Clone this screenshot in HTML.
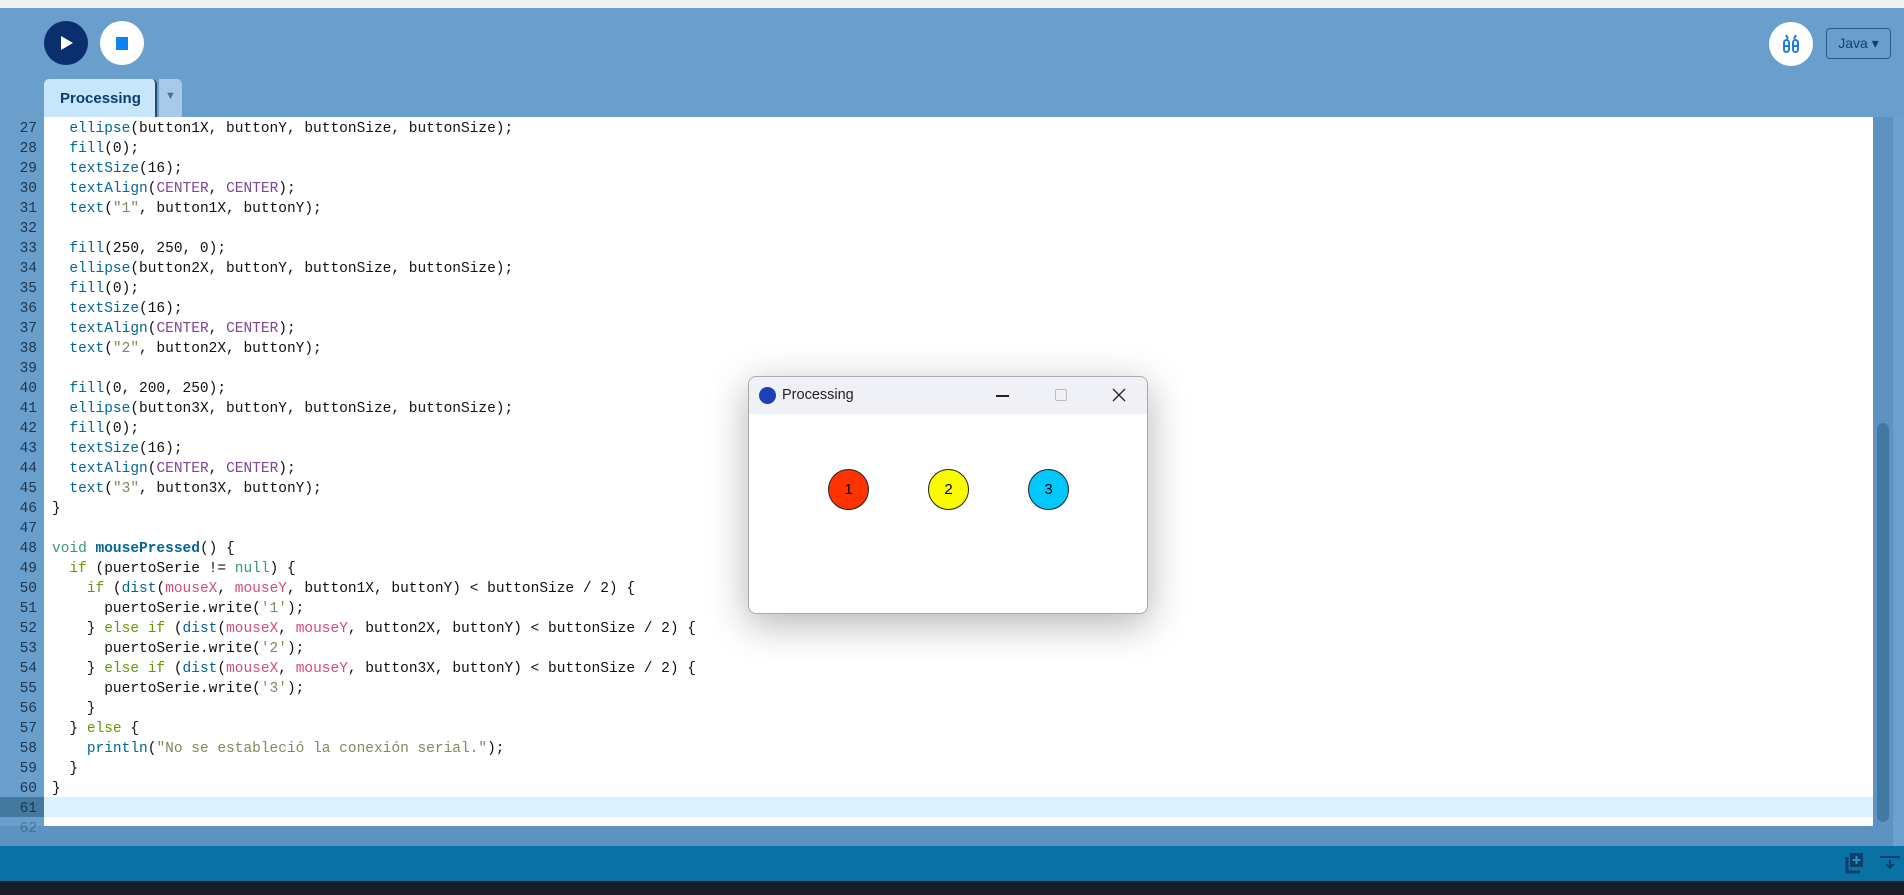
<!DOCTYPE html>
<html><head><meta charset="utf-8"><style>
*{margin:0;padding:0;box-sizing:border-box}
body{width:1904px;height:895px;overflow:hidden;background:#6a9fcd;position:relative;font-family:"Liberation Sans",sans-serif}
.abs{position:absolute}
#code{position:absolute;left:52px;top:119px;font-family:"Liberation Mono",monospace;font-size:14.5px;line-height:20px;color:#111;white-space:pre}
#gut{position:absolute;left:0;top:119px;width:37px;text-align:right;font-family:"Liberation Mono",monospace;font-size:14.5px;line-height:20px;color:#1c3550;white-space:pre}
.f{color:#006699}.c{color:#7d4793}.s{color:#7d8a5e}.k{color:#33997e}.g{color:#669900}.m{color:#d94a7a}.b{color:#006699;font-weight:bold}
</style></head><body>
<div class="abs" style="left:0;top:0;width:1904px;height:8px;background:#f0f0f0"></div>
<div class="abs" style="left:44px;top:21px;width:44px;height:44px;border-radius:50%;background:#0b2f6e"></div>
<svg class="abs" style="left:60px;top:35px" width="14" height="16"><path d="M1 1 L13 8 L1 15Z" fill="#fff"/></svg>
<div class="abs" style="left:100px;top:21px;width:44px;height:44px;border-radius:50%;background:#fff"></div>
<div class="abs" style="left:116px;top:37px;width:12px;height:13px;background:#0a84f0"></div>
<div class="abs" style="left:1769px;top:22px;width:44px;height:44px;border-radius:50%;background:#fff"></div>
<svg class="abs" style="left:1781px;top:33px" width="20" height="22" viewBox="0 0 20 22"><g fill="none" stroke="#1e7fe0" stroke-width="2"><path d="M5 2 L7 6 M15 2 L13 6"/><rect x="3" y="7" width="5" height="12" rx="2.5"/><rect x="12" y="7" width="5" height="12" rx="2.5"/><path d="M3 13 H8 M12 13 H17"/></g></svg>
<div class="abs" style="left:1826px;top:28px;width:65px;height:31px;border:1.5px solid #1f5f8f;border-radius:4px;color:#14406a;font-size:14px;line-height:28px;text-align:center">Java ▾</div>
<div class="abs" style="left:44px;top:79px;width:113px;height:38px;background:#c8e6fb;border-radius:5px 5px 0 0;border-right:2px solid #2c4a66;color:#0d3c6e;font-weight:bold;font-size:15px;line-height:40px;padding-left:16px">Processing</div>
<div class="abs" style="left:159px;top:79px;width:23px;height:38px;background:#a7caeb;border-radius:0 5px 0 0;color:#4f6f8f;font-size:11px;text-align:center;line-height:34px">▼</div>
<div class="abs" style="left:44px;top:117px;width:1829px;height:709px;background:#fff"></div>
<div class="abs" style="left:44px;top:797px;width:1829px;height:20px;background:#ddf0fe"></div>
<div class="abs" style="left:0;top:797px;width:44px;height:20px;background:#44789f"></div>
<div class="abs" style="left:1873px;top:117px;width:20px;height:709px;background:#5e93c1"></div>
<div class="abs" style="left:1893px;top:117px;width:11px;height:729px;background:#6ba0d0"></div>
<div class="abs" style="left:1877px;top:423px;width:12px;height:399px;background:#4179a3;border-radius:6px"></div>
<div class="abs" style="left:0;top:826px;width:1893px;height:20px;background:#5e93c1"></div>
<div class="abs" style="left:0;top:846px;width:1904px;height:35px;background:#0a71a4"></div>
<div class="abs" style="left:0;top:881px;width:1904px;height:14px;background:#171e27"></div>
<svg class="abs" style="left:1845px;top:852px" width="20" height="22"><path d="M2 5 V20 H15" fill="none" stroke="#0b3f6c" stroke-width="3"/><rect x="5" y="1" width="13" height="14" fill="#0b3f6c"/><path d="M11.5 4 V12 M7.5 8 H15.5" stroke="#2a90c8" stroke-width="2"/></svg>
<svg class="abs" style="left:1879px;top:855px" width="22" height="16"><path d="M1 2 H21 M11 5 V13 M7 9 L11 13 L15 9" fill="none" stroke="#0b3f6c" stroke-width="2"/></svg>
<div id="gut">27
28
29
30
31
32
33
34
35
36
37
38
39
40
41
42
43
44
45
46
47
48
49
50
51
52
53
54
55
56
57
58
59
60
61
<span style="opacity:.4">62</span></div>
<div id="code">  <span class="f">ellipse</span>(button1X, buttonY, buttonSize, buttonSize);
  <span class="f">fill</span>(0);
  <span class="f">textSize</span>(16);
  <span class="f">textAlign</span>(<span class="c">CENTER</span>, <span class="c">CENTER</span>);
  <span class="f">text</span>(<span class="s">"1"</span>, button1X, buttonY);

  <span class="f">fill</span>(250, 250, 0);
  <span class="f">ellipse</span>(button2X, buttonY, buttonSize, buttonSize);
  <span class="f">fill</span>(0);
  <span class="f">textSize</span>(16);
  <span class="f">textAlign</span>(<span class="c">CENTER</span>, <span class="c">CENTER</span>);
  <span class="f">text</span>(<span class="s">"2"</span>, button2X, buttonY);

  <span class="f">fill</span>(0, 200, 250);
  <span class="f">ellipse</span>(button3X, buttonY, buttonSize, buttonSize);
  <span class="f">fill</span>(0);
  <span class="f">textSize</span>(16);
  <span class="f">textAlign</span>(<span class="c">CENTER</span>, <span class="c">CENTER</span>);
  <span class="f">text</span>(<span class="s">"3"</span>, button3X, buttonY);
}

<span class="k">void</span> <span class="b">mousePressed</span>() {
  <span class="g">if</span> (puertoSerie != <span class="k">null</span>) {
    <span class="g">if</span> (<span class="f">dist</span>(<span class="m">mouseX</span>, <span class="m">mouseY</span>, button1X, buttonY) &lt; buttonSize / 2) {
      puertoSerie.write(<span class="s">'1'</span>);
    } <span class="g">else</span> <span class="g">if</span> (<span class="f">dist</span>(<span class="m">mouseX</span>, <span class="m">mouseY</span>, button2X, buttonY) &lt; buttonSize / 2) {
      puertoSerie.write(<span class="s">'2'</span>);
    } <span class="g">else</span> <span class="g">if</span> (<span class="f">dist</span>(<span class="m">mouseX</span>, <span class="m">mouseY</span>, button3X, buttonY) &lt; buttonSize / 2) {
      puertoSerie.write(<span class="s">'3'</span>);
    }
  } <span class="g">else</span> {
    <span class="f">println</span>(<span class="s">"No se estableció la conexión serial."</span>);
  }
}
</div>
<div class="abs" style="left:748px;top:376px;width:400px;height:238px;background:#fff;border:1px solid #aaa;border-radius:8px;overflow:hidden;box-shadow:0 10px 40px rgba(0,0,0,.3)">
  <div style="height:37px;background:#eff1f7;position:relative">
    <div class="abs" style="left:10px;top:10px;width:17px;height:17px;border-radius:50%;background:#1d3fb8"></div>
    <div class="abs" style="left:33px;top:10px;font-family:'Liberation Sans',sans-serif;font-size:14.5px;color:#222">Processing</div>
    <div class="abs" style="left:247px;top:18px;width:13px;height:1.5px;background:#222"></div>
    <div class="abs" style="left:306px;top:12px;width:12px;height:12px;border:1px solid #bbb;border-radius:2px"></div>
    <svg class="abs" style="left:363px;top:11px" width="14" height="14"><path d="M1 1 L13 13 M13 1 L1 13" stroke="#222" stroke-width="1.3"/></svg>
  </div>
  <div class="abs" style="left:79px;top:92px;width:41px;height:41px;border-radius:50%;background:#ff3300;border:1px solid #222;text-align:center;line-height:39px;font-size:15px">1</div>
  <div class="abs" style="left:179px;top:92px;width:41px;height:41px;border-radius:50%;background:#fafa00;border:1px solid #222;text-align:center;line-height:39px;font-size:15px">2</div>
  <div class="abs" style="left:279px;top:92px;width:41px;height:41px;border-radius:50%;background:#00c8fa;border:1px solid #222;text-align:center;line-height:39px;font-size:15px">3</div>
</div>
</body></html>
